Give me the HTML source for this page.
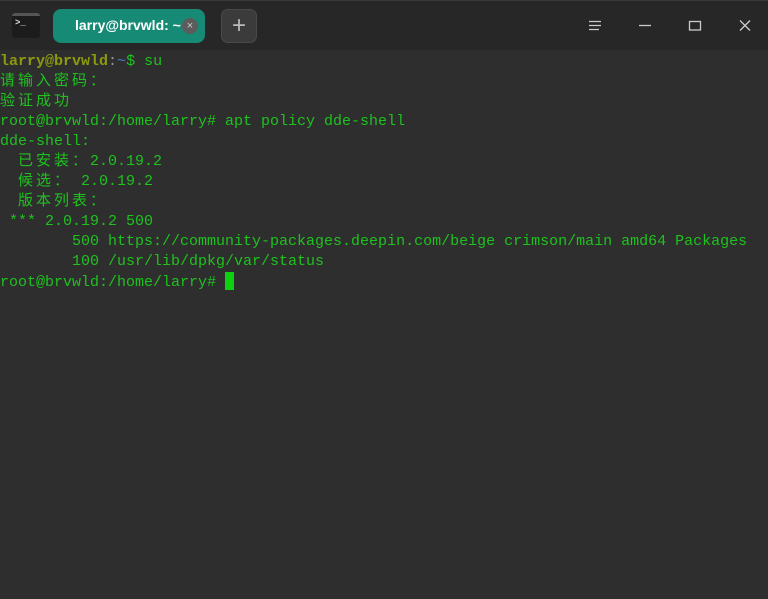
<!DOCTYPE html>
<html><head><meta charset="utf-8"><style>
*{margin:0;padding:0;box-sizing:border-box}
body{width:768px;height:599px;background:#2e2e2e;overflow:hidden;position:relative;font-family:"Liberation Sans",sans-serif}
.tb{position:absolute;left:0;top:0;width:768px;height:50px;background:#272727;border-top:1px solid #3a3a3a}
.term{position:absolute;left:0;top:52px;font-family:"Liberation Mono","Noto Sans CJK SC",monospace;font-size:15px;line-height:20px;color:#1ec21e;white-space:pre}
.c{display:inline-block;width:18px;text-align:left}
.u{color:#8c9a0c;font-weight:bold}
.cur{display:inline-block;width:9px;height:18px;background:#0fd00f;vertical-align:-4px}
</style></head><body>
<div class="tb">
 <div style="position:absolute;left:12px;top:12px;width:28px;height:25px;background:#1c1c1c;border-radius:3px;border-top:3px solid #555"></div>
 <div style="position:absolute;left:15px;top:17px;color:#ddd;font:bold 9px 'Liberation Mono',monospace">&gt;_</div>
 <div style="position:absolute;left:53px;top:8px;width:152px;height:34px;background:#178a76;border-radius:8px"></div>
 <div style="position:absolute;left:75px;top:16px;color:#fff;font-size:14px;font-weight:bold">larry@brvwld: ~</div>
 <div style="position:absolute;left:182px;top:17px;width:16px;height:16px;border-radius:50%;background:#5c5c5c;color:#ccc;font-size:11px;line-height:16px;text-align:center">×</div>
 <div style="position:absolute;left:221px;top:8px;width:36px;height:34px;background:#3b3b3b;border:1px solid #4a4a4a;border-radius:7px;color:#bbb;font-size:24px;line-height:31px;text-align:center">+</div>
 <svg style="position:absolute;left:560px;top:14px" width="200" height="20" stroke="#ccc" stroke-width="1.3" fill="none">
  <path d="M29 6.5h12M29 10.5h12M29 14.5h10"/>
  <path d="M79 10.5h12"/>
  <rect x="129.5" y="6.5" width="11" height="8.5"/>
  <path d="M180 5.5l10 10M190 5.5l-10 10"/>
 </svg>
</div>
<div class="term"><span class="u">larry@brvwld</span><span style="color:#999">:</span><span style="color:#4a7ac0">~</span>$ su
<span class="c">请</span><span class="c">输</span><span class="c">入</span><span class="c">密</span><span class="c">码</span><span class="c">：</span>
<span class="c">验</span><span class="c">证</span><span class="c">成</span><span class="c">功</span>
root@brvwld:/home/larry# apt policy dde-shell
dde-shell:
  <span class="c">已</span><span class="c">安</span><span class="c">装</span><span class="c">：</span>2.0.19.2
  <span class="c">候</span><span class="c">选</span><span class="c">：</span> 2.0.19.2
  <span class="c">版</span><span class="c">本</span><span class="c">列</span><span class="c">表</span><span class="c">：</span>
 *** 2.0.19.2 500
        500 https://community-packages.deepin.com/beige crimson/main amd64 Packages
        100 /usr/lib/dpkg/var/status
root@brvwld:/home/larry# <span class="cur"></span></div>
</body></html>
